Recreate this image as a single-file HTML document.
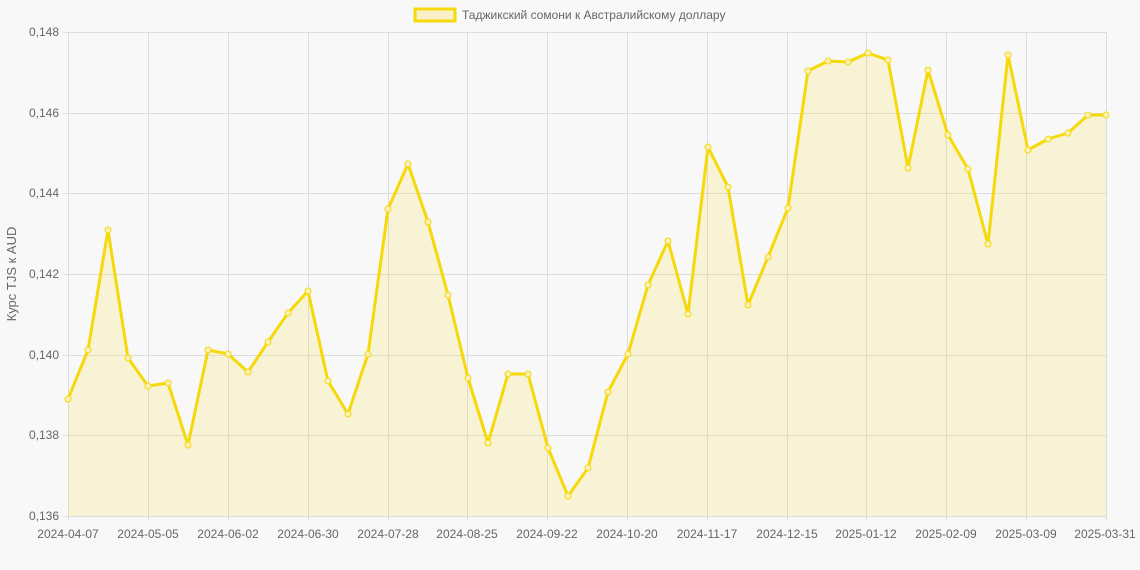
<!DOCTYPE html>
<html><head><meta charset="utf-8"><style>
html,body{margin:0;padding:0;background:#f8f8f8;width:1140px;height:570px;overflow:hidden}
text{font-family:"Liberation Sans",sans-serif;font-size:12px;fill:#666}
</style></head><body>
<svg width="1140" height="570" xmlns="http://www.w3.org/2000/svg">
<defs>
<marker id="m" markerUnits="userSpaceOnUse" markerWidth="10" markerHeight="10" refX="5" refY="5">
<circle cx="5" cy="5" r="3" fill="#faf0b8" stroke="#f5d90a" stroke-width="1"/>
</marker>
</defs>
<g stroke="#ddd" stroke-width="1">
<line x1="63" y1="32.5" x2="1106" y2="32.5"/>
<line x1="63" y1="113.5" x2="1106" y2="113.5"/>
<line x1="63" y1="193.5" x2="1106" y2="193.5"/>
<line x1="63" y1="274.5" x2="1106" y2="274.5"/>
<line x1="63" y1="355.5" x2="1106" y2="355.5"/>
<line x1="63" y1="435.5" x2="1106" y2="435.5"/>
<line x1="63" y1="516.5" x2="1106" y2="516.5"/>
<line x1="68.5" y1="32" x2="68.5" y2="521"/>
<line x1="148.5" y1="32" x2="148.5" y2="521"/>
<line x1="228.5" y1="32" x2="228.5" y2="521"/>
<line x1="308.5" y1="32" x2="308.5" y2="521"/>
<line x1="388.5" y1="32" x2="388.5" y2="521"/>
<line x1="467.5" y1="32" x2="467.5" y2="521"/>
<line x1="547.5" y1="32" x2="547.5" y2="521"/>
<line x1="627.5" y1="32" x2="627.5" y2="521"/>
<line x1="707.5" y1="32" x2="707.5" y2="521"/>
<line x1="787.5" y1="32" x2="787.5" y2="521"/>
<line x1="866.5" y1="32" x2="866.5" y2="521"/>
<line x1="946.5" y1="32" x2="946.5" y2="521"/>
<line x1="1026.5" y1="32" x2="1026.5" y2="521"/>
<line x1="1106.5" y1="32" x2="1106.5" y2="521"/>
</g>
<polygon fill="rgba(245,217,10,0.15)" points="68,516 68,399 88,350 108,230 128,358 148,386 168,383 188,445 208,350 228,354 248,372 268,342 288,313 308,291 328,381 348,414 368,354 388,209 408,164 428,222 448,295 468,378 488,443 508,374 528,374 548,448 568,496 588,468 608,392 628,354 648,285 668,241 688,314 708,147 728,187 748,305 768,257 788,208 808,71 828,61 848,62 868,53 888,60 908,168 928,70 948,135 968,169 988,244 1008,55 1028,150 1048,139 1068,133 1088,115 1106,115 1106,516"/>
<polyline fill="none" stroke="#f5d90a" stroke-width="3" stroke-linejoin="round" marker-start="url(#m)" marker-mid="url(#m)" marker-end="url(#m)" points="68,399 88,350 108,230 128,358 148,386 168,383 188,445 208,350 228,354 248,372 268,342 288,313 308,291 328,381 348,414 368,354 388,209 408,164 428,222 448,295 468,378 488,443 508,374 528,374 548,448 568,496 588,468 608,392 628,354 648,285 668,241 688,314 708,147 728,187 748,305 768,257 788,208 808,71 828,61 848,62 868,53 888,60 908,168 928,70 948,135 968,169 988,244 1008,55 1028,150 1048,139 1068,133 1088,115 1106,115"/>
<g text-anchor="end">
<text x="59" y="36">0,148</text>
<text x="59" y="117">0,146</text>
<text x="59" y="197">0,144</text>
<text x="59" y="278">0,142</text>
<text x="59" y="359">0,140</text>
<text x="59" y="439">0,138</text>
<text x="59" y="520">0,136</text>
</g>
<g text-anchor="middle">
<text x="68" y="538">2024-04-07</text>
<text x="148" y="538">2024-05-05</text>
<text x="228" y="538">2024-06-02</text>
<text x="308" y="538">2024-06-30</text>
<text x="388" y="538">2024-07-28</text>
<text x="467" y="538">2024-08-25</text>
<text x="547" y="538">2024-09-22</text>
<text x="627" y="538">2024-10-20</text>
<text x="707" y="538">2024-11-17</text>
<text x="787" y="538">2024-12-15</text>
<text x="866" y="538">2025-01-12</text>
<text x="946" y="538">2025-02-09</text>
<text x="1026" y="538">2025-03-09</text>
<text x="1105" y="538">2025-03-31</text>
</g>
<text x="16" y="274" text-anchor="middle" transform="rotate(-90 16 274)" style="font-size:13px">Курс TJS к AUD</text>
<rect x="415" y="9" width="40" height="12" fill="#faf0c8" stroke="#f5d90a" stroke-width="3"/>
<text x="462" y="19">Таджикский сомони к Австралийскому доллару</text>
</svg>
</body></html>
